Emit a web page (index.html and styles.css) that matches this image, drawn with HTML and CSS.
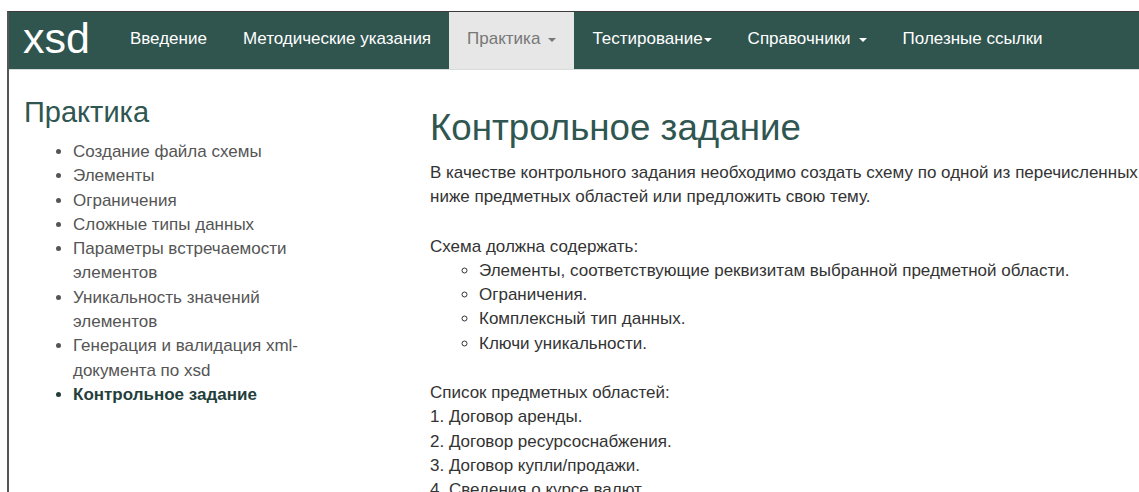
FILE: index.html
```html
<!DOCTYPE html>
<html lang="ru">
<head>
<meta charset="utf-8">
<title>xsd — Контрольное задание</title>
<link rel="stylesheet" href="styles.css">
</head>
<body>
<div class="frame">
  <nav class="navbar">
    <a class="brand" href="#">xsd</a>
    <ul class="nav">
      <li><a href="#">Введение</a></li>
      <li><a href="#">Методические указания</a></li>
      <li class="active"><a href="#">Практика <span class="caret"></span></a></li>
      <li class="tight"><a href="#">Тестирование<span class="caret"></span></a></li>
      <li><a href="#">Справочники <span class="caret"></span></a></li>
      <li><a href="#">Полезные ссылки</a></li>
    </ul>
  </nav>
  <div class="page">
    <aside class="sidebar">
      <h2 class="side-title">Практика</h2>
      <ul class="side-list">
        <li>Создание файла схемы</li>
        <li>Элементы</li>
        <li>Ограничения</li>
        <li>Сложные типы данных</li>
        <li>Параметры встречаемости элементов</li>
        <li>Уникальность значений элементов</li>
        <li>Генерация и валидация xml-документа по xsd</li>
        <li class="current">Контрольное задание</li>
      </ul>
    </aside>
    <main class="content">
      <h1 class="title">Контрольное задание</h1>
      <p class="para">В качестве контрольного задания необходимо создать схему по одной из перечисленных ниже предметных областей или предложить свою тему.</p>
      <p class="lead-in">Схема должна содержать:</p>
      <ul class="req-list">
        <li>Элементы, соответствующие реквизитам выбранной предметной области.</li>
        <li>Ограничения.</li>
        <li>Комплексный тип данных.</li>
        <li>Ключи уникальности.</li>
      </ul>
      <p class="lead-in">Список предметных областей:<br>
      1. Договор аренды.<br>
      2. Договор ресурсоснабжения.<br>
      3. Договор купли/продажи.<br>
      4. Сведения о курсе валют.</p>
    </main>
  </div>
</div>
</body>
</html>
```

FILE: styles.css
```css
html, body {
  margin: 0;
  padding: 0;
  background: #fff;
  overflow: hidden;
}

body {
  font-family: "Liberation Sans", Arial, sans-serif;
  font-size: 17px;
  line-height: 1.42857;
  color: #333;
  padding: 11px 0 0 7px;
}

.frame {
  border-top: 1px solid #3a3a3a;
  border-left: 2px solid #555;
  min-height: 600px;
}

/* top navigation bar */
.navbar {
  background: #30544e;
  height: 57px;
  display: flex;
  align-items: stretch;
  border-bottom: 1px solid #d8dcdb;
  padding-left: 14px;
}

.brand {
  color: #fff;
  font-size: 43px;
  line-height: 48px;
  text-decoration: none;
  padding-top: 2px;
  margin-right: 22px;
}

.nav {
  list-style: none;
  margin: 0;
  padding: 0;
  display: flex;
}

.nav li {
  display: flex;
}

.nav a {
  display: flex;
  align-items: center;
  padding: 0 18px 2px;
  color: #fff;
  text-decoration: none;
  font-size: 17px;
}

.nav .active a {
  background: #e7e7e7;
  color: #777;
}

.caret {
  display: inline-block;
  width: 0;
  height: 0;
  margin-left: 8px;
  border-top: 4px solid currentColor;
  border-left: 4px solid transparent;
  border-right: 4px solid transparent;
  vertical-align: middle;
}

.tight .caret {
  margin-left: 1px;
}

/* two-column page body */
.page {
  display: grid;
  grid-template-columns: 300px 730px;
  column-gap: 106px;
  padding-left: 15px;
}

.side-title {
  font-size: 29px;
  font-weight: normal;
  line-height: 32px;
  color: #2f5650;
  margin: 26px 0 0 0;
}

.side-list {
  margin: 12px 0 0 0;
  padding-left: 49px;
  color: #555;
}

.side-list .current {
  font-weight: bold;
  color: #243f3b;
}

.title {
  font-size: 36.7px;
  font-weight: normal;
  line-height: 40px;
  color: #2f5650;
  margin: 38px 0 0 0;
}

.para {
  margin: 13px 0 0 0;
}

.lead-in {
  margin: 25px 0 0 0;
}

.req-list {
  list-style: circle;
  margin: 0;
  padding-left: 49px;
}
```
